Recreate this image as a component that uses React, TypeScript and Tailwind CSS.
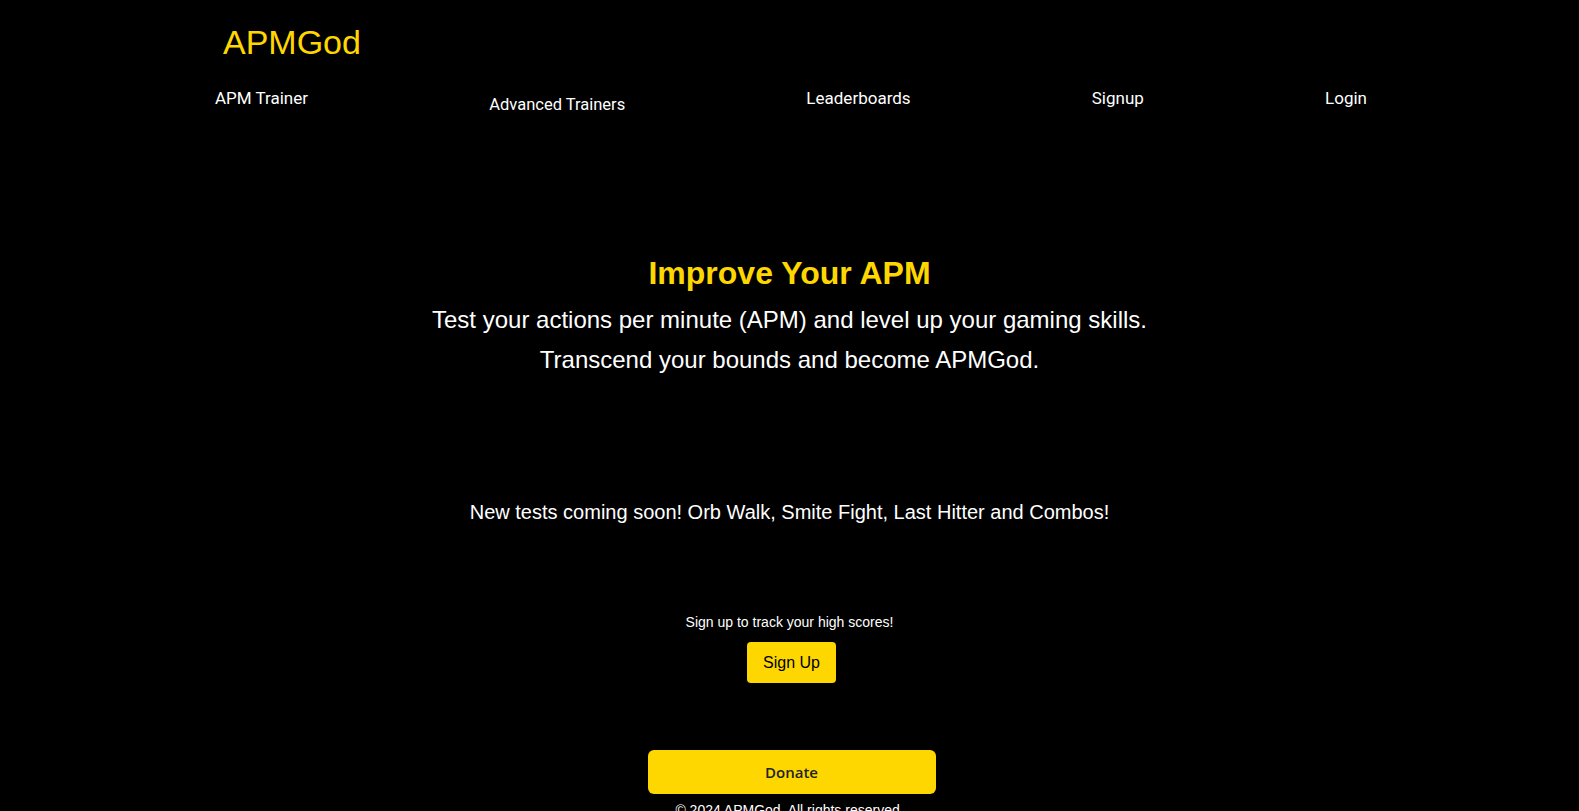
const navLinks = ['APM Trainer', 'Advanced Trainers', 'Leaderboards', 'Signup', 'Login'];

const App = () => {
    return (
        <div className="min-h-screen bg-black font-['Liberation_Sans',Arial,sans-serif] text-white">
            <header>
                <div className="pl-[223px] pt-[23px] text-[34px] leading-[39px] text-[#FFD700]">APMGod</div>
                <nav className="mt-[24px] flex items-start justify-between pl-[215px] pr-[212px] font-['Roboto',sans-serif] text-[17px] leading-6">
                    {navLinks.map((link) => (
                        <a
                            key={link}
                            href="#"
                            className={link === 'Advanced Trainers' ? 'mt-[7px] text-[16.5px] text-white' : 'text-white'}
                        >
                            {link}
                        </a>
                    ))}
                </nav>
            </header>

            <main className="flex flex-col items-center text-center">
                <h1 className="mt-[138px] text-[32px] font-bold leading-[37px] text-[#FFD700]">Improve Your APM</h1>
                <p className="mt-[8px] text-[24px] leading-[40px]">Test your actions per minute (APM) and level up your gaming skills.</p>
                <p className="text-[24px] leading-[40px]">Transcend your bounds and become APMGod.</p>

                <p className="mt-[121px] text-[20px] leading-[23px]">
                    New tests coming soon! Orb Walk, Smite Fight, Last Hitter and Combos!
                </p>

                <p className="mt-[88px] text-sm leading-5">Sign up to track your high scores!</p>
                <button className="ml-1 mt-[10px] flex h-[41px] w-[89px] items-center justify-center rounded bg-[#FFD700] text-base text-black">
                    Sign Up
                </button>

                <button className="ml-1 mt-[67px] flex h-[44px] w-[288px] items-center justify-center rounded-md bg-[#FFD700] font-['Open_Sans',sans-serif] text-[15px] font-semibold text-[#222]">
                    Donate
                </button>
                <footer className="mt-[6px] pb-4 text-sm leading-5">© 2024 APMGod. All rights reserved.</footer>
            </main>
        </div>
    );
};

export default App;
